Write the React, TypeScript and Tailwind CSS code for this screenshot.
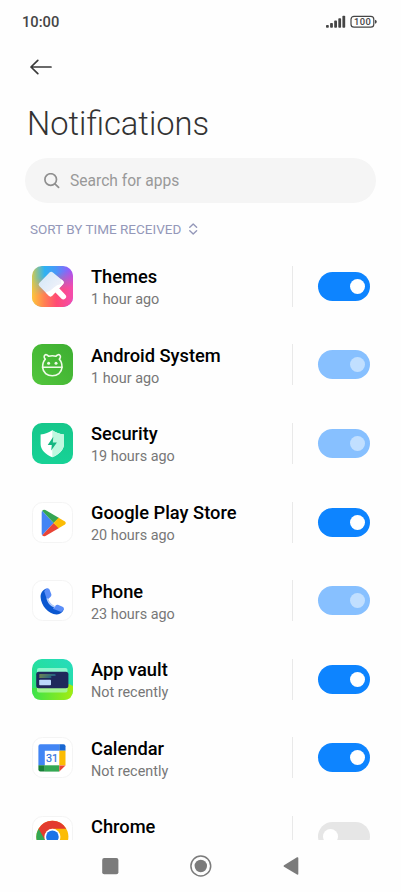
import { useState, type ReactNode } from 'react'

type AppRow = { name: string; time: string; icon: ReactNode; on: boolean; locked?: boolean }

function Tile({ fill, children }: { fill?: string; children: ReactNode }) {
  return (
    <svg viewBox="0 0 41 41" className="w-[41px] h-[41px] shrink-0">
      <rect x=".5" y=".5" width="40" height="40" rx="10" fill={fill || '#fff'} stroke={fill ? 'none' : '#f4f4f4'} />
      {fill && <rect width="41" height="41" rx="10" fill={fill} />}
      {children}
    </svg>
  )
}

const ThemesIcon = () => (
  <Tile fill="url(#th-base)">
    <defs>
      <linearGradient id="th-base" x1="0" y1=".35" x2="1" y2=".3">
        <stop offset="0" stopColor="#d8c94e" />
        <stop offset=".12" stopColor="#8fc18e" />
        <stop offset=".32" stopColor="#2eb2f2" />
        <stop offset=".6" stopColor="#4a97f8" />
        <stop offset="1" stopColor="#a351fa" />
      </linearGradient>
      <linearGradient id="th-low" x1="0" y1="0" x2="1" y2="0">
        <stop offset="0" stopColor="#ffc53b" />
        <stop offset=".3" stopColor="#ff8152" />
        <stop offset=".6" stopColor="#ff4b74" />
        <stop offset="1" stopColor="#f44cae" />
      </linearGradient>
      <linearGradient id="th-fade" x1="0" y1="0" x2=".25" y2="1">
        <stop offset=".3" stopColor="#000" />
        <stop offset=".72" stopColor="#fff" />
      </linearGradient>
      <mask id="th-mask"><rect width="41" height="41" fill="url(#th-fade)" /></mask>
      <linearGradient id="th-head" x1=".1" y1=".2" x2=".8" y2=".8">
        <stop offset="0" stopColor="#d6e9f8" />
        <stop offset="1" stopColor="#f3f2fa" />
      </linearGradient>
    </defs>
    <rect width="41" height="41" rx="10" fill="url(#th-low)" mask="url(#th-mask)" />
    <path d="M23.5 22.5 L31.3 30.6" stroke="#fff" strokeWidth="5.6" strokeLinecap="round" />
    <path d="M17.5 6.4 Q19.2 5 20.9 6.4 L31.2 14.9 Q32.6 16.5 31.2 18.1 L27.5 22 L23.5 26.2 L20.1 29.8 Q18.5 31.2 16.9 29.8 L7.3 20.1 Q5.9 18.4 7.3 16.9Z" fill="url(#th-head)" />
    <path d="M29.2 13.3 L31.2 14.9 Q32.6 16.5 31.2 18.1 L20.1 29.8 Q18.5 31.2 16.9 29.8 L13.6 26.5 Q19 25 22 21.5 Q24.5 18.5 29.2 18Z" fill="#fff" />
  </Tile>
)

const AndroidIcon = () => (
  <Tile fill="url(#an-bg)">
    <defs>
      <linearGradient id="an-bg" x1="1" y1="0" x2="0" y2="1">
        <stop offset="0" stopColor="#3dae31" />
        <stop offset="1" stopColor="#52c63c" />
      </linearGradient>
    </defs>
    <g fill="none" stroke="#f0fbe9" strokeWidth="1.6" strokeLinecap="round" strokeLinejoin="round">
      <path d="M10.6 23.2 C10.6 19.6 11.5 16.9 13.3 15.1 C10.4 12.4 13.6 8.4 16.6 12.2 C18.8 11.6 21.8 11.6 24 12.2 C27 8.4 30.2 12.4 27.3 15.1 C29.1 16.9 30 19.6 30 23.2Z" />
      <path d="M10.6 23.4 C11 28.6 15.2 31.8 20.3 31.8 C25.4 31.8 29.6 28.6 30 23.4" />
    </g>
    <circle cx="16.6" cy="19.2" r="1.5" fill="#f0fbe9" />
    <circle cx="24" cy="19.2" r="1.5" fill="#f0fbe9" />
  </Tile>
)

const SecurityIcon = () => (
  <Tile fill="url(#se-bg)">
    <defs>
      <linearGradient id="se-bg" x1="0" y1="0" x2="0" y2="1">
        <stop offset="0" stopColor="#16c78b" />
        <stop offset="1" stopColor="#17d296" />
      </linearGradient>
    </defs>
    <path d="M20.3 7.3 C23.5 9.7 27.5 11 32 11.5 V21 C32 27.3 26.5 31.7 20.3 34.2 C14.1 31.7 8.6 27.3 8.6 21 V11.5 C13.1 11 17.1 9.7 20.3 7.3Z" fill="#fff" />
    <path d="M20.3 7.3 C23.5 9.7 27.5 11 32 11.5 V21 C32 27.3 26.5 31.7 20.3 34.2Z" fill="#bff8df" />
    <path d="M21.3 13.8 L15.7 21.9 H19.8 L19.2 27.5 L24.9 19.4 H20.8Z" fill="#14b780" />
  </Tile>
)

const PlayIcon = () => (
  <Tile>
    <path d="M10.2 8.8 L21.6 21 L10.2 33.2 Q9.7 32.6 9.7 31.6 V10.4 Q9.7 9.4 10.2 8.8Z" fill="#4385f4" />
    <path d="M10.2 8.8 Q11.4 7 13.4 8 L27.1 16.1 L21.6 21Z" fill="#34a552" />
    <path d="M10.2 33.2 Q11.4 35 13.4 34 L27.1 25.9 L21.6 21Z" fill="#e94436" />
    <path d="M26.5 15.8 L33 19.6 Q34.8 21 33 22.4 L26.5 26.2 L21.6 21Z" fill="#fbbc05" />
  </Tile>
)

const PhoneIcon = () => (
  <Tile>
    <path d="M14.2 8.4 C10.4 10.2 8.4 13 8.6 17.2 C9 25.6 16.3 33.6 24.5 34.5 C28 34.7 30.5 32.6 31.8 29.6 L24.5 26.8 C20.3 25.8 16.4 22 15.8 18.4Z" fill="#0b57d0" />
    <path d="M14.2 8.4 C15.6 7.8 17 8.3 17.5 9.6 L19.2 13.7 C19.7 15 19.3 16.2 18.4 16.9 L15 20 L12.2 11.2Z" fill="#5a8df8" />
    <path d="M31.8 29.6 C32.2 28.2 31.6 27.2 30.5 26.7 L26.5 25 C25.2 24.5 24.3 24.8 23.4 25.8 L20.8 28.7 L29.2 32Z" fill="#5a8df8" />
    <path d="M14.5 18.5 L15.8 18.2 C17 22 20 25.2 23.6 26.3 L22.6 27.8 C18.4 26.2 15.4 22.8 14.5 18.5Z" fill="#b3ccfb" />
  </Tile>
)

const VaultIcon = () => (
  <Tile fill="url(#va-bg)">
    <defs>
      <linearGradient id="va-bg" x1="0" y1="1" x2=".8" y2="0">
        <stop offset="0" stopColor="#35e35a" />
        <stop offset=".55" stopColor="#25dfa0" />
        <stop offset="1" stopColor="#27dcb9" />
      </linearGradient>
      <linearGradient id="va-line" x1="0" x2="1">
        <stop offset="0" stopColor="#b4d94c" />
        <stop offset="1" stopColor="#279bb0" />
      </linearGradient>
      <linearGradient id="va-low" x1="0" x2="1">
        <stop offset="0" stopColor="#3be34b" />
        <stop offset="1" stopColor="#a5ec10" />
      </linearGradient>
    </defs>
    <path d="M0 29 H30 L37 25 L41 27 V31 Q41 41 31 41 H10 Q0 41 0 31Z" fill="url(#va-low)" />
    <rect x="5" y="9" width="30.5" height="8" rx="2" fill="#8df5cd" />
    <rect x="5" y="26" width="30.5" height="7.6" rx="2" fill="#a3f590" />
    <rect x="4.2" y="12.7" width="32.2" height="16.6" rx="2.5" fill="#1f285b" />
    <rect x="7.2" y="15.6" width="16.4" height="1" rx=".5" fill="url(#va-line)" />
    <rect x="7.2" y="17.6" width="12.2" height="1" rx=".5" fill="url(#va-line)" />
    <rect x="7.2" y="20.8" width="11.8" height="5.4" rx=".8" fill="#bcd9fc" />
  </Tile>
)

const CalendarIcon = () => (
  <Tile>
    <path d="M27.3 7.3 V13.7 H12.8 V28.3 H6.4 V9.3 Q6.4 7.3 8.4 7.3Z" fill="#4285f4" />
    <path d="M27.3 7.3 H31.5 Q33.5 7.3 33.5 9.3 V13.7 H27.3Z" fill="#1967d2" />
    <rect x="27.3" y="13.7" width="6.2" height="14.7" fill="#fbbc04" />
    <path d="M6.4 28.3 H12.8 V34.6 H8.4 Q6.4 34.6 6.4 32.6Z" fill="#188038" />
    <rect x="12.8" y="28.3" width="14.5" height="6.3" fill="#34a853" />
    <path d="M27.3 28.4 H33.5 L27.3 34.6Z" fill="#ea4335" />
    <text x="20" y="24.9" textAnchor="middle" fontSize="10.8" fill="#2f70dc" stroke="#2f70dc" strokeWidth=".2" fontFamily="Roboto, sans-serif">31</text>
  </Tile>
)

const ChromeIcon = () => (
  <Tile>
    <circle cx="20.4" cy="20.8" r="16" fill="#fbbc05" />
    <path d="M20.4 20.8 L6.54 12.8 A16 16 0 0 0 20.4 36.8 L27.3 24.8Z" fill="#34a853" />
    <path d="M6.54 12.8 A16 16 0 0 1 34.26 12.8 H20.4 L13.5 24.8Z" fill="#e33b2e" />
    <circle cx="20.4" cy="20.8" r="8" fill="#fff" />
    <circle cx="20.4" cy="20.8" r="6.3" fill="#1a73e8" />
  </Tile>
)

const APPS: AppRow[] = [
  { name: 'Themes', time: '1 hour ago', icon: <ThemesIcon />, on: true },
  { name: 'Android System', time: '1 hour ago', icon: <AndroidIcon />, on: true, locked: true },
  { name: 'Security', time: '19 hours ago', icon: <SecurityIcon />, on: true, locked: true },
  { name: 'Google Play Store', time: '20 hours ago', icon: <PlayIcon />, on: true },
  { name: 'Phone', time: '23 hours ago', icon: <PhoneIcon />, on: true, locked: true },
  { name: 'App vault', time: 'Not recently', icon: <VaultIcon />, on: true },
  { name: 'Calendar', time: 'Not recently', icon: <CalendarIcon />, on: true },
  { name: 'Chrome', time: '', icon: <ChromeIcon />, on: false },
]

function Toggle({ on, locked, label, onChange }: { on: boolean; locked?: boolean; label: string; onChange: () => void }) {
  const track = !on ? 'bg-[#e6e6e6] justify-start' : locked ? 'bg-[#87c0ff] justify-end' : 'bg-[#0d84ff] justify-end'
  return (
    <button role="switch" aria-checked={on} aria-label={label} disabled={locked} onClick={onChange}
      className={`w-[52.5px] h-[29px] rounded-full px-[5.5px] flex items-center shrink-0 ${track}`}>
      <span className={`w-[15px] h-[15px] rounded-full ${locked ? 'bg-[#c1dfff]' : 'bg-white'}`} />
    </button>
  )
}

function StatusBar() {
  return (
    <div className="h-[44px] pl-[22px] pr-[24px] flex items-center justify-between text-[#454545]">
      <span className="text-[14.7px] font-medium">10:00</span>
      <svg viewBox="0 0 51 14" className="w-[51px] h-[14px]" fill="currentColor">
        <rect x="0" y="10" width="2.8" height="2.8" rx=".8" />
        <rect x="4.1" y="8" width="2.8" height="4.8" rx=".8" />
        <rect x="8.2" y="5.6" width="2.8" height="7.2" rx=".8" />
        <rect x="12.3" y="3.2" width="2.8" height="9.6" rx=".8" />
        <rect x="16.4" y=".8" width="2.8" height="12" rx=".8" />
        <rect x="25" y="1.4" width="22.8" height="10.8" rx="3" fill="none" stroke="currentColor" strokeWidth="1.2" />
        <path d="M49 4.8 Q50.8 5.1 50.8 6.8 Q50.8 8.5 49 8.8Z" />
        <text x="36.4" y="10.2" textAnchor="middle" fontSize="9.4" fontWeight="500" fontFamily="Roboto, sans-serif" textLength="17">100</text>
      </svg>
    </div>
  )
}

function NavBar() {
  return (
    <div className="h-[52px] shrink-0 bg-[#fefefe] flex items-center justify-between pl-[102px] pr-[102.5px]">
      <svg viewBox="0 0 17 17" className="w-[17px] h-[17px]" fill="#7b7b7b"><rect x=".2" y="0" width="16.2" height="16.2" rx="2" /></svg>
      <svg viewBox="0 0 22 22" className="w-[22px] h-[22px]" fill="#7b7b7b">
        <circle cx="10.8" cy="11" r="9.9" fill="none" stroke="#7b7b7b" strokeWidth="1.5" />
        <circle cx="10.8" cy="11" r="6.2" />
      </svg>
      <svg viewBox="0 0 16 18" className="w-[16px] h-[18px]" fill="#7b7b7b">
        <path d="M1 8.2 L14 .3 Q15.3 -.1 15.3 1 V17 Q15.3 18.1 14 17.6 L1 9.8 Q.2 9 1 8.2Z" />
      </svg>
    </div>
  )
}

export default function App() {
  const [apps, setApps] = useState(APPS)

  const toggle = (name: string) => {
    setApps(prev => prev.map(a => a.name === name ? { ...a, on: !a.on } : a))
  }

  return (
    <div className="w-[401px] h-[892px] bg-[#fefefe] flex flex-col overflow-hidden font-[Roboto,sans-serif]">
      <StatusBar />

      <div className="h-[46px] px-[30px] flex items-center">
        <svg viewBox="0 0 22 16" className="w-[22px] h-[16px]" fill="none" stroke="#3a3a3a" strokeWidth="1.7" strokeLinecap="round" strokeLinejoin="round">
          <path d="M21 8 H1 M7.8 1.3 L1 8 L7.8 14.7" />
        </svg>
      </div>

      <h1 className="h-[68px] pl-[27px] text-[32.7px] leading-[69px] font-light text-[#333]">Notifications</h1>

      <div className="mx-[25px] h-[45px] shrink-0 rounded-full bg-[#f5f5f5] flex items-center pl-[19px] gap-[10px]">
        <svg viewBox="0 0 16 16" className="w-[16px] h-[16px]" fill="none" stroke="#8f8f8f" strokeWidth="1.7" strokeLinecap="round">
          <circle cx="6.7" cy="6.5" r="5.8" />
          <path d="M10.9 10.8 L14.6 14.4" />
        </svg>
        <span className="pt-[3px] text-[15.6px] text-[#999]">Search for apps</span>
      </div>

      <div className="h-[44px] shrink-0 pt-[8.6px] pl-[30px] flex items-center gap-[7.5px] text-[#9498b9]">
        <span className="text-[13.5px]">SORT BY TIME RECEIVED</span>
        <svg viewBox="0 0 9 12" className="w-[9px] h-[12px]" fill="none" stroke="currentColor" strokeWidth="1.4" strokeLinecap="round" strokeLinejoin="round">
          <path d="M.8 4.2 L4.2 1 L7.6 4.2 M.8 7.8 L4.2 11 L7.6 7.8" />
        </svg>
      </div>

      <div className="flex-1 min-h-0 overflow-hidden">
        {apps.map(a => (
          <div key={a.name} className="h-[78.6px] pl-[31.6px] pr-[31px] flex items-center">
            {a.icon}
            <div className="flex-1 pl-[18.4px] pt-[5px]">
              <div className="text-[18.3px] leading-[22px] font-medium text-black">{a.name}</div>
              <div className="h-[23px] text-[14.4px] leading-[23px] text-[#777]">{a.time}</div>
            </div>
            <div className="w-px h-[41px] bg-[#e9e9e9] mr-[25px]" />
            <Toggle on={a.on} locked={a.locked} label={a.name} onChange={() => toggle(a.name)} />
          </div>
        ))}
      </div>

      <NavBar />
    </div>
  )
}
